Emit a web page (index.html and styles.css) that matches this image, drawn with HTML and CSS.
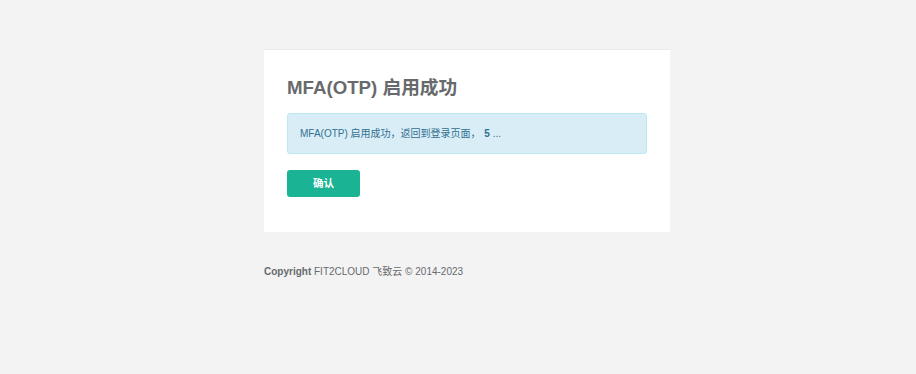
FILE: index.html
```html
<!DOCTYPE html>
<html lang="zh-CN">
<head>
    <meta charset="UTF-8">
    <title>MFA(OTP) 启用成功</title>
    <link rel="stylesheet" href="styles.css">
</head>
<body>
    <div class="wrapper">
        <div class="ibox">
            <h2 class="title">MFA(OTP) 启用成功</h2>
            <div class="alert">
                MFA(OTP) 启用成功，返回到登录页面， <strong class="count">5</strong> ...
            </div>
            <a href="#login" class="btn">确认</a>
        </div>
        <div class="footer">
            <strong>Copyright</strong> FIT2CLOUD 飞致云 &copy; 2014-2023
        </div>
    </div>
</body>
</html>
```

FILE: styles.css
```css
body {
    font-family: "Liberation Sans", Arial, "Noto Sans CJK SC", sans-serif;
    margin: 0;
    padding: 0;
    background-color: #f3f3f4;
    color: #676a6c;
}
.wrapper {
    width: 406px;
    margin-left: calc(50% - 194px);
    padding-top: 49px;
}
.ibox {
    background: #fff;
    border-top: 1px solid #e7eaec;
    padding: 22px 23px 35px;
}
.title {
    margin: 4px 0 13px;
    font-size: 18.7px;
    font-weight: bold;
    line-height: 24px;
}
.alert {
    background-color: #d9edf7;
    border: 1px solid #bce8f1;
    border-radius: 3px;
    color: #31708f;
    font-size: 10px;
    line-height: 16px;
    padding: 12px 12px 11px;
}
.count {
    margin-left: 1px;
}
.btn {
    display: inline-block;
    margin-top: 16px;
    width: 73px;
    height: 27px;
    line-height: 27px;
    text-align: center;
    background-color: #1ab394;
    color: #fff;
    font-size: 10.5px;
    font-weight: bold;
    text-decoration: none;
    border-radius: 3px;
}
.footer {
    margin-top: 32px;
    font-size: 10px;
    line-height: 16px;
}
```
